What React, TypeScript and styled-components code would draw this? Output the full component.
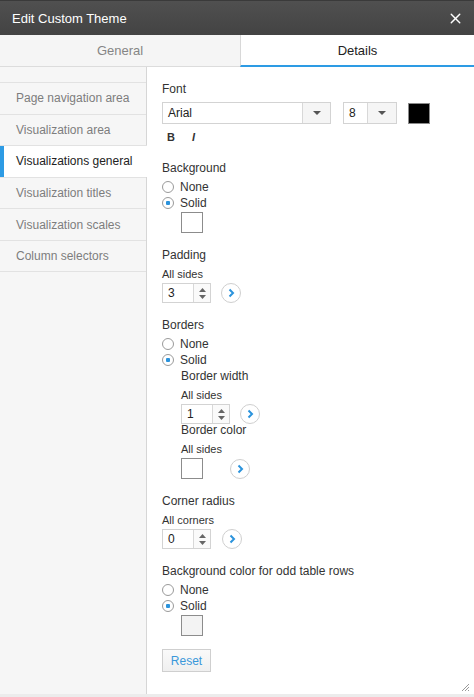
import { createGlobalStyle, styled } from 'styled-components';
import { X } from 'lucide-react';

const NAV_ITEMS = [
  'Page navigation area',
  'Visualization area',
  'Visualizations general',
  'Visualization titles',
  'Visualization scales',
  'Column selectors',
];

const ACTIVE_ITEM = 'Visualizations general';

const GlobalStyle = createGlobalStyle`
  html, body {
    margin: 0;
    padding: 0;
    height: 100%;
  }
  body {
    font-family: "Liberation Sans", Arial, sans-serif;
    color: #333;
    background: #fff;
  }
  #root {
    height: 100%;
  }
  * {
    box-sizing: border-box;
  }
`;

const ChevronCircle = ({ offset = 10 }: { offset?: number }) => (
  <CircleButton $offset={offset}>
    <svg width="10" height="10" viewBox="0 0 10 10">
      <path d="M3.5 1.5 L7 5 L3.5 8.5" fill="none" stroke="#2b93dc" strokeWidth="2" />
    </svg>
  </CircleButton>
);

const Spinner = ({ value }: { value: string }) => (
  <SpinBox>
    <SpinValue>{value}</SpinValue>
    <SpinArrows>
      <svg width="7" height="4" viewBox="0 0 7 4">
        <path d="M0 4 L3.5 0 L7 4 Z" fill="#666" />
      </svg>
      <svg width="7" height="4" viewBox="0 0 7 4">
        <path d="M0 0 L3.5 4 L7 0 Z" fill="#666" />
      </svg>
    </SpinArrows>
  </SpinBox>
);

const DropArrow = () => (
  <svg width="8" height="4" viewBox="0 0 8 4">
    <path d="M0 0 L4 4 L8 0 Z" fill="#555" />
  </svg>
);

const RadioGroup = () => (
  <Radios>
    <RadioRow>
      <RadioCircle />
      <span>None</span>
    </RadioRow>
    <RadioRow>
      <RadioCircle $checked />
      <span>Solid</span>
    </RadioRow>
  </Radios>
);

const App = () => {
  return (
    <>
      <GlobalStyle />
      <Dialog>
        <Header>
          <HeaderTitle>Edit Custom Theme</HeaderTitle>
          <X size={17} color="#fff" strokeWidth={2} />
        </Header>
        <Tabs>
          <Tab>General</Tab>
          <Tab $active>Details</Tab>
        </Tabs>
        <Body>
          <Sidebar>
            {NAV_ITEMS.map((item) => (
              <NavItem key={item} $active={item === ACTIVE_ITEM}>
                {item}
              </NavItem>
            ))}
          </Sidebar>
          <Content>
            <Section>
              <SectionTitle>Font</SectionTitle>
              <FontRow>
                <Select $width={169} $button={28}>
                  <SelectValue>Arial</SelectValue>
                  <SelectButton>
                    <DropArrow />
                  </SelectButton>
                </Select>
                <Select $width={54} $button={29}>
                  <SelectValue>8</SelectValue>
                  <SelectButton>
                    <DropArrow />
                  </SelectButton>
                </Select>
                <Swatch $color="#000" $border="#8a8a8a" />
              </FontRow>
              <StyleRow>
                <StyleToggle>B</StyleToggle>
                <StyleToggle $italic>I</StyleToggle>
              </StyleRow>
            </Section>

            <Section>
              <SectionTitle>Background</SectionTitle>
              <RadioGroup />
              <Indent>
                <Swatch $color="#fff" />
              </Indent>
            </Section>

            <Section>
              <SectionTitle>Padding</SectionTitle>
              <SubLabel>All sides</SubLabel>
              <ControlRow>
                <Spinner value="3" />
                <ChevronCircle />
              </ControlRow>
            </Section>

            <Section>
              <SectionTitle>Borders</SectionTitle>
              <RadioGroup />
              <Indent $flush>
                <SectionTitle>Border width</SectionTitle>
                <SubLabel>All sides</SubLabel>
                <ControlRow>
                  <Spinner value="1" />
                  <ChevronCircle />
                </ControlRow>
                <SectionTitle $pull>Border color</SectionTitle>
                <SubLabel>All sides</SubLabel>
                <ControlRow>
                  <Swatch $color="#fff" />
                  <ChevronCircle offset={27} />
                </ControlRow>
              </Indent>
            </Section>

            <Section>
              <SectionTitle>Corner radius</SectionTitle>
              <SubLabel>All corners</SubLabel>
              <ControlRow>
                <Spinner value="0" />
                <ChevronCircle offset={11} />
              </ControlRow>
            </Section>

            <Section>
              <SectionTitle>Background color for odd table rows</SectionTitle>
              <RadioGroup />
              <Indent>
                <Swatch $color="#f3f3f3" />
              </Indent>
            </Section>

            <ResetButton>Reset</ResetButton>
          </Content>
        </Body>
        <Grip>
          <svg width="9" height="9" viewBox="0 0 9 9">
            <path d="M8 1 L1 8 M8 4 L4 8 M8 7 L7 8" stroke="#999" strokeWidth="1" />
          </svg>
        </Grip>
      </Dialog>
    </>
  );
};

export default App;

const Dialog = styled.div`
  position: relative;
  display: flex;
  flex-direction: column;
  height: 100%;
  border-bottom: 3px solid #ececec;
`;

const Header = styled.header`
  display: flex;
  align-items: center;
  justify-content: space-between;
  height: 35px;
  padding: 0 10px 0 12px;
  background: linear-gradient(#505050, #434343);
  border-top: 1px solid #3a3a3a;
`;

const HeaderTitle = styled.h1`
  margin: 0;
  font-size: 13px;
  font-weight: normal;
  color: #fff;
`;

const Tabs = styled.nav`
  display: flex;
  height: 32px;
  background: #f5f5f5;
  border-bottom: 1px solid #dcdcdc;
`;

const Tab = styled.div<{ $active?: boolean }>`
  flex: ${(p) => (p.$active ? '0 0 234px' : '1')};
  display: flex;
  align-items: center;
  justify-content: center;
  font-size: 13px;
  color: ${(p) => (p.$active ? '#222' : '#858585')};
  background: ${(p) => (p.$active ? '#fff' : 'transparent')};
  border-left: ${(p) => (p.$active ? '1px solid #d8d8d8' : 'none')};
  border-bottom: ${(p) => (p.$active ? '2px solid #2d9be4' : 'none')};
  margin-bottom: ${(p) => (p.$active ? '-1px' : '0')};
`;

const Body = styled.div`
  flex: 1;
  display: flex;
  min-height: 0;
`;

const Sidebar = styled.aside`
  width: 147px;
  flex-shrink: 0;
  padding-top: 15px;
  background: #f6f6f6;
  border-right: 1px solid #d6d6d6;
`;

const NavItem = styled.div<{ $active?: boolean }>`
  height: 31.6px;
  display: flex;
  align-items: center;
  padding-left: 16px;
  font-size: 12px;
  color: ${(p) => (p.$active ? '#222' : '#7d7d7d')};
  background: ${(p) => (p.$active ? '#fff' : 'transparent')};
  border-top: 1px solid #e2e2e2;
  box-shadow: ${(p) => (p.$active ? 'inset 4px 0 0 #2d9be4' : 'none')};
  margin-right: ${(p) => (p.$active ? '-1px' : '0')};

  &:last-child {
    border-bottom: 1px solid #e2e2e2;
  }
`;

const Content = styled.main`
  flex: 1;
  padding: 14px 0 0 15px;
  display: flex;
  flex-direction: column;
  gap: 14px;
`;

const Section = styled.section`
  display: flex;
  flex-direction: column;
  align-items: flex-start;
`;

const SectionTitle = styled.div<{ $pull?: boolean }>`
  margin-top: ${(p) => (p.$pull ? '-2px' : '0')};
  font-size: 12px;
  line-height: 16px;
  color: #333;
`;

const SubLabel = styled.div`
  margin-top: 4px;
  font-size: 11px;
  line-height: 14px;
  color: #333;
`;

const FontRow = styled.div`
  display: flex;
  align-items: center;
  gap: 12px;
  margin-top: 5px;

  & > :last-child {
    margin-left: -1px;
  }
`;

const Select = styled.div<{ $width: number; $button: number }>`
  display: flex;
  width: ${(p) => p.$width}px;
  height: 22px;
  border: 1px solid #d3d3d3;
  background: #fff;

  & > :last-child {
    width: ${(p) => p.$button}px;
  }
`;

const SelectValue = styled.div`
  flex: 1;
  display: flex;
  align-items: center;
  padding-left: 5px;
  font-size: 12px;
  color: #222;
`;

const SelectButton = styled.div`
  display: flex;
  align-items: center;
  justify-content: center;
  background: #f5f5f5;
  border-left: 1px solid #d8d8d8;
`;

const Swatch = styled.div<{ $color: string; $border?: string }>`
  width: 22px;
  height: 21px;
  background: ${(p) => p.$color};
  border: 1px solid ${(p) => p.$border || '#8c8c8c'};
`;

const StyleRow = styled.div`
  display: flex;
  gap: 17px;
  height: 18px;
  align-items: center;
  margin-top: 4px;
  padding-left: 5px;
`;

const StyleToggle = styled.span<{ $italic?: boolean }>`
  font-size: 11px;
  font-weight: bold;
  font-style: ${(p) => (p.$italic ? 'italic' : 'normal')};
  color: #333;
`;

const Radios = styled.div`
  margin-top: 3px;
  display: flex;
  flex-direction: column;
`;

const RadioRow = styled.label`
  display: flex;
  align-items: center;
  gap: 6px;
  height: 16px;
  font-size: 12px;
  color: #333;
`;

const RadioCircle = styled.span<{ $checked?: boolean }>`
  width: 12px;
  height: 12px;
  border-radius: 50%;
  border: 1px solid #9a9a9a;
  background: ${(p) =>
    p.$checked
      ? 'radial-gradient(circle, #2b93dc 0 2px, #fff 2.5px)'
      : '#fff'};
`;

const Indent = styled.div<{ $flush?: boolean }>`
  display: flex;
  flex-direction: column;
  align-items: flex-start;
  padding-left: 19px;
  margin-top: ${(p) => (p.$flush ? '0' : '1px')};
`;

const ControlRow = styled.div`
  display: flex;
  align-items: center;
  margin-top: 2px;
`;

const SpinBox = styled.div`
  display: flex;
  width: 49px;
  height: 20px;
  border: 1px solid #d3d3d3;
  background: #fff;
`;

const SpinValue = styled.div`
  flex: 1;
  display: flex;
  align-items: center;
  padding-left: 5px;
  font-size: 12px;
  color: #222;
`;

const SpinArrows = styled.div`
  width: 17px;
  display: flex;
  flex-direction: column;
  align-items: center;
  justify-content: center;
  gap: 3px;
  border-left: 1px solid #d8d8d8;
  background: #fafafa;
`;

const CircleButton = styled.div<{ $offset: number }>`
  width: 20px;
  height: 20px;
  margin-left: ${(p) => p.$offset}px;
  border-radius: 50%;
  border: 1px solid #cfcfcf;
  background: #fff;
  display: flex;
  align-items: center;
  justify-content: center;
`;

const ResetButton = styled.button`
  align-self: flex-start;
  margin-top: -1px;
  width: 49px;
  height: 23px;
  padding: 0;
  border: 1px solid #cfcfcf;
  background: linear-gradient(#fafafa, #efefef);
  color: #3a98da;
  font-family: inherit;
  font-size: 12px;
`;

const Grip = styled.div`
  position: absolute;
  right: 4px;
  bottom: 2px;
  display: flex;
`;
